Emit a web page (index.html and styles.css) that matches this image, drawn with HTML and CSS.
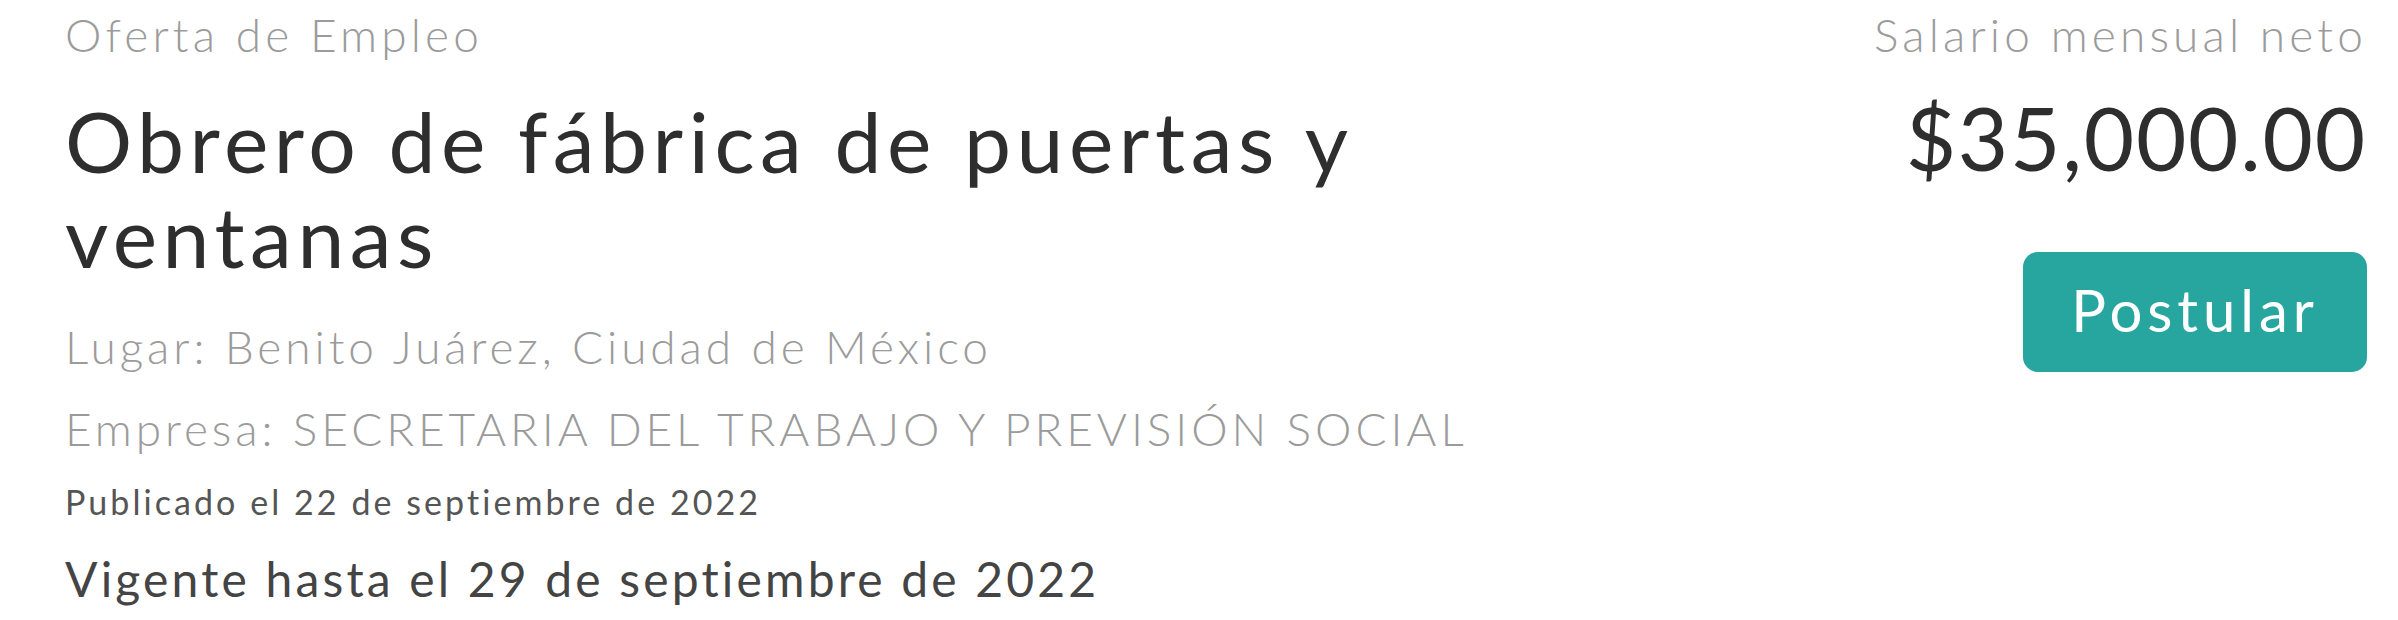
FILE: index.html
```html
<!DOCTYPE html>
<html lang="es">
<head>
<meta charset="utf-8">
<title>Oferta de Empleo</title>
<link rel="stylesheet" href="styles.css">
</head>
<body>
<div class="offer">
  <div class="offer-main">
    <div class="label">Oferta de Empleo</div>
    <h1 class="title">Obrero de fábrica de puertas y ventanas</h1>
    <p class="meta meta-first">Lugar: Benito Juárez, Ciudad de México</p>
    <p class="meta">Empresa: SECRETARIA DEL TRABAJO Y PREVISIÓN SOCIAL</p>
    <p class="published">Publicado el 22 de septiembre de 2022</p>
    <p class="valid">Vigente hasta el 29 de septiembre de 2022</p>
  </div>
  <div class="offer-side">
    <div class="label">Salario mensual neto</div>
    <div class="salary">$35,000.00</div>
    <button class="apply" type="button">Postular</button>
  </div>
</div>
</body>
</html>
```

FILE: styles.css
```css
html, body {
  margin: 0;
  padding: 0;
  background: #ffffff;
}

body {
  font-family: "Lato", "Open Sans", "Liberation Sans", sans-serif;
  color: #333333;
}

.offer {
  display: flex;
  justify-content: space-between;
  padding: 0 31px 0 65px;
}

.offer-main {
  width: 1500px;
}

.offer-side {
  display: flex;
  flex-direction: column;
  align-items: flex-end;
}

.label {
  font-size: 46px;
  line-height: 56px;
  font-weight: 300;
  color: #9b9b9b;
  letter-spacing: 0.09em;
  padding-top: 7px;
}

.title {
  margin: 30px 0 0;
  font-size: 84px;
  line-height: 95px;
  font-weight: 400;
  color: #2e2e2e;
  letter-spacing: 0.066em;
}

.meta {
  margin: 0;
  font-size: 46px;
  line-height: 82px;
  font-weight: 300;
  color: #9b9b9b;
  letter-spacing: 0.085em;
}

.meta-first {
  margin-top: 23px;
}

.published {
  margin: 7px 0 0;
  font-size: 34px;
  line-height: 50px;
  font-weight: 400;
  color: #555555;
  letter-spacing: 0.09em;
}

.valid {
  margin: 22px 0 0;
  font-size: 48px;
  line-height: 60px;
  font-weight: 400;
  color: #444444;
  letter-spacing: 0.066em;
}

.salary {
  margin-top: 25px;
  font-size: 87px;
  line-height: 100px;
  font-weight: 400;
  color: #2e2e2e;
  letter-spacing: 0.02em;
}

.apply {
  margin-top: 64px;
  width: 344px;
  height: 120px;
  padding: 0 0 4px;
  border: none;
  border-radius: 15px;
  background: #27a69f;
  color: #ffffff;
  font-family: "Lato", "Open Sans", "Liberation Sans", sans-serif;
  font-size: 58px;
  line-height: 116px;
  font-weight: 400;
  letter-spacing: 0.085em;
  text-align: center;
}
```
